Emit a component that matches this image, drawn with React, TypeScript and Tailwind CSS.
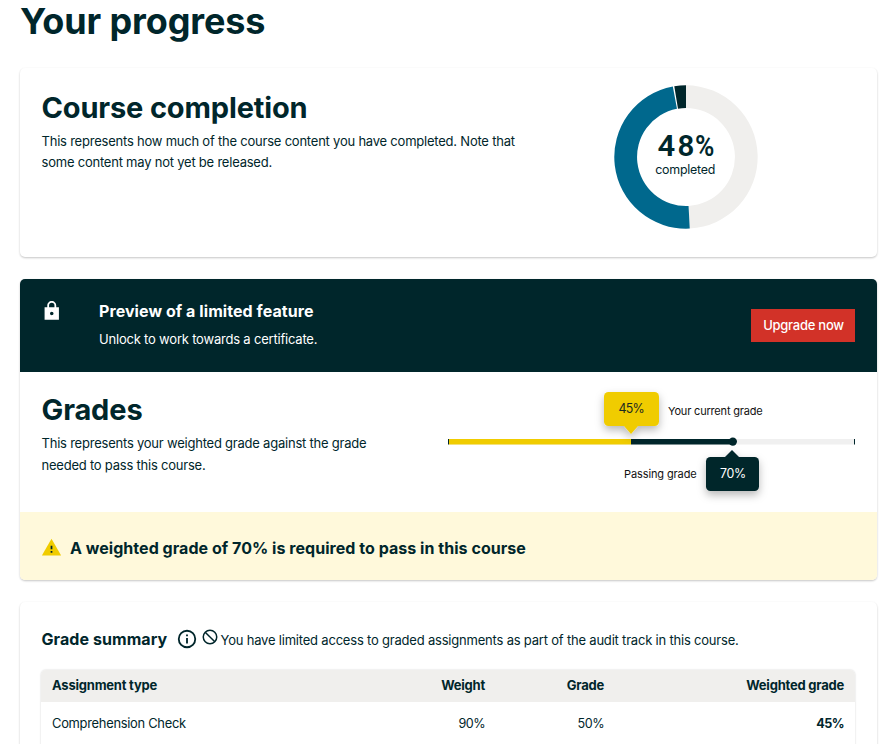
import React from "react";

const INK = "#00262b";

function polar(r: number, deg: number) {
  const a = ((deg - 90) * Math.PI) / 180;
  return `${(72 + r * Math.cos(a)).toFixed(2)} ${(72 + r * Math.sin(a)).toFixed(2)}`;
}

function ringSlice(start: number, end: number) {
  const large = end - start > 180 ? 1 : 0;
  return `M${polar(71.7, start)}A71.7 71.7 0 ${large} 1 ${polar(71.7, end)}L${polar(49, end)}A49 49 0 ${large} 0 ${polar(49, start)}Z`;
}

function CompletionDonut() {
  return (
    <svg width="144" height="144" viewBox="0 0 144 144" className="block">
      <path d={ringSlice(0, 177)} fill="#f0efed" />
      <path d={ringSlice(177, 349.4)} fill="#00688d" />
      <path d={ringSlice(350.6, 360)} fill={INK} />
      <g fill={INK} fontFamily="Roboto, sans-serif" fontWeight="600" fontSize="30">
        <text x="43.6" y="71" textLength="17.5" lengthAdjust="spacingAndGlyphs">4</text>
        <text x="63.5" y="71" textLength="16.6" lengthAdjust="spacingAndGlyphs">8</text>
        <text x="81" y="71" textLength="19.2" lengthAdjust="spacingAndGlyphs">%</text>
      </g>
      <text x="71.2" y="89" textAnchor="middle" fill={INK} fontFamily="Inter, sans-serif" fontSize="12.4" textLength="60">completed</text>
    </svg>
  );
}

function GradeBar() {
  return (
    <svg width="440" height="124" viewBox="430 384 440 124" className="block overflow-visible font-[Inter,sans-serif]">
      <defs>
        <filter id="bubble" x="-40%" y="-40%" width="180%" height="200%">
          <feDropShadow dx="0" dy="4" stdDeviation="4" floodColor="#000" floodOpacity="0.28" />
        </filter>
      </defs>
      <rect x="448" y="439" width="407" height="5.5" fill="#f0f0f0" />
      <rect x="631" y="439" width="102" height="5.5" fill={INK} />
      <rect x="449" y="439" width="182" height="5.5" fill="#f0cc00" />
      <rect x="448" y="439" width="1" height="5.5" fill={INK} />
      <rect x="854" y="439" width="1" height="5.5" fill={INK} />
      <circle cx="732.8" cy="441.6" r="4.2" fill={INK} />
      <g filter="url(#bubble)">
        <rect x="604" y="392" width="55" height="34" rx="4.5" fill="#f0cc00" />
        <path d="M624 426h14l-7 8z" fill="#f0cc00" />
      </g>
      <g filter="url(#bubble)">
        <rect x="706" y="457" width="53" height="34" rx="4.5" fill={INK} />
        <path d="M725 457h14l-7-7z" fill={INK} />
      </g>
      <text x="618.5" y="413" fontSize="12.4" fill="#1c2a20" textLength="26">45%</text>
      <text x="720" y="478" fontSize="12.4" fill="#fff" textLength="26">70%</text>
      <text x="668" y="415" fontSize="11" fill="#111" textLength="94.5">Your current grade</text>
      <text x="624" y="478" fontSize="11" fill="#111" textLength="72.5">Passing grade</text>
    </svg>
  );
}

const cardShadow = "shadow-[0_1px_2px_rgba(0,0,0,0.18),0_1px_3px_rgba(0,0,0,0.06)]";

export default function App() {
  return (
    <main className="h-[744px] w-[893px] overflow-hidden bg-white pl-5 font-[Inter,sans-serif] text-[13px] tracking-[-0.22px] text-[#00262b]">
      <h1 className="h-[68px] text-[36px] font-bold leading-[42px] tracking-[-0.12px] whitespace-nowrap">Your progress</h1>

      <section className={`flex h-[189px] w-[857px] rounded-[5px] bg-white ${cardShadow}`}>
        <div className="w-[594px] pl-[21.5px] pt-[22px]">
          <h2 className="text-[29px] font-bold leading-[36px] tracking-[-0.15px]">Course completion</h2>
          <p className="mt-[5px] w-[500px] leading-[21px]">
            This represents how much of the course content you have completed. Note that<br />
            some content may not yet be released.
          </p>
        </div>
        <div className="pt-[17px]"><CompletionDonut /></div>
      </section>

      <section className={`mt-[22px] flex h-[301px] w-[857px] flex-col overflow-hidden rounded-[5px] bg-white ${cardShadow}`}>
        <div className="flex h-[93px] shrink-0 bg-[#00262b] text-white">
          <svg width="21.5" height="21.5" viewBox="0 0 24 24" className="ml-[21px] mt-[21px] shrink-0" fill="currentColor">
            <path d="M20 8h-3V6.2C17 3.4 14.8 1 12 1S7 3.4 7 6.200V8H4v14h16V8zm-8 9a2 2 0 1 1 0-4 2 2 0 0 1 0 4zM9 8V6a3 3 0 0 1 6 0v2H9z" />
          </svg>
          <div className="ml-[36.5px] w-[652px] pt-[21px]">
            <h3 className="text-[16px] font-bold leading-[23px] tracking-[0.07px]">Preview of a limited feature</h3>
            <p className="mt-[6px] leading-[21px] tracking-[-0.2px]">Unlock to work towards a certificate.</p>
          </div>
          <button className="mt-[30px] h-[33px] w-[104px] bg-[#d23228] pl-px text-[13px] font-medium tracking-[-0.25px] whitespace-nowrap">Upgrade now</button>
        </div>
        <div className="flex h-[140px] shrink-0">
          <div className="w-[410px] pl-[21.5px] pt-[20px]">
            <h2 className="text-[29px] font-bold leading-[36px] tracking-[-0.13px]">Grades</h2>
            <p className="mt-[4px] leading-[22px]">This represents your weighted grade against the grade<br />needed to pass this course.</p>
          </div>
          <div className="pt-[12px]"><GradeBar /></div>
        </div>
        <div className="flex h-[68px] shrink-0 items-center bg-[#fff9db] pl-[21px] pt-[4px]">
          <svg width="21" height="21" viewBox="0 0 24 24" className="-mt-[2px]">
            <path d="M1 21h22L12 2z" fill="#f0cc00" />
            <path d="M11 10h2v4h-2zm0 6h2v2h-2z" fill={INK} />
          </svg>
          <h3 className="ml-[8px] text-[16px] font-bold tracking-[0.04px]">A weighted grade of 70% is required to pass in this course</h3>
        </div>
      </section>

      <section className={`mt-[22px] h-[200px] w-[857px] rounded-[5px] bg-white px-[21px] ${cardShadow}`}>
        <div className="flex h-[67px] items-center pl-[0.5px] pt-[8px]">
          <h3 className="-mt-[2px] w-[134px] text-[16px] font-bold tracking-[0.07px] whitespace-nowrap">Grade summary</h3>
          <svg width="22" height="22" viewBox="0 0 24 24" className="-mt-px" fill="none" stroke={INK} strokeWidth="2">
            <circle cx="12" cy="12" r="9" />
            <path d="M12 11v6M12 7v2" />
          </svg>
          <svg width="18" height="18" viewBox="0 0 24 24" className="-mt-[5px] ml-[3px]" fill="none" stroke={INK} strokeWidth="2">
            <circle cx="12" cy="12" r="9" />
            <path d="M5.600 5.600 18.400 18.400" />
          </svg>
          <p className="ml-[2px] mt-[2px] tracking-[-0.2px] whitespace-nowrap">You have limited access to graded assignments as part of the audit track in this course.</p>
        </div>
        <table className="mt-px w-[814px] table-fixed border-separate border-spacing-0 rounded-[5px] shadow-[0_0_2px_rgba(0,0,0,0.2)]">
          <colgroup><col className="w-[299px]" /><col className="w-[156px]" /><col className="w-[119px]" /><col className="w-[240px]" /></colgroup>
          <thead>
            <tr className="h-[32px] bg-[#f0efed] text-right font-bold tracking-[-0.22px]">
              <th className="rounded-tl-[5px] pl-[11px] text-left">Assignment type</th>
              <th className="pr-[11px]">Weight</th><th className="pr-[11px]">Grade</th>
              <th className="rounded-tr-[5px] pr-[11px]">Weighted grade</th>
            </tr>
          </thead>
          <tbody>
            <tr className="h-[60px] text-right align-top leading-[20px]">
              <td className="pl-[11px] pt-[12px] text-left text-[12.9px] tracking-[-0.28px]">Comprehension Check</td>
              <td className="pr-[11px] pt-[12px] text-[12.6px] tracking-[-0.5px]">90%</td>
              <td className="pr-[11px] pt-[12px] text-[12.6px] tracking-[-0.5px]">50%</td>
              <td className="pr-[11px] pt-[12px] text-[12.6px] font-bold tracking-[-0.5px]">45%</td>
            </tr>
          </tbody>
        </table>
      </section>
    </main>
  );
}
